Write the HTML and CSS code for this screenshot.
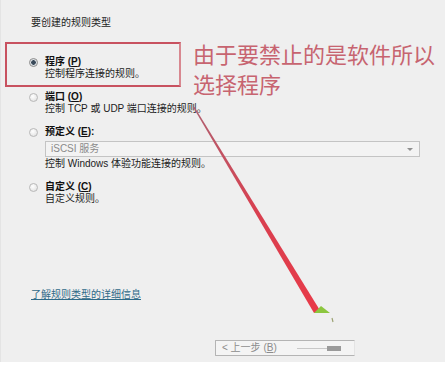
FILE: index.html
```html
<!DOCTYPE html>
<html lang="zh-CN">
<head>
<meta charset="utf-8">
<title>规则类型</title>
<link rel="stylesheet" href="styles.css">
</head>
<body>
<div class="page">
  <div class="title">要创建的规则类型</div>
  <div class="options">
    <div class="opt">
      <span class="radio checked"></span>
      <div class="body">
        <div class="label">程序 (<u>P</u>)</div>
        <div class="desc">控制程序连接的规则。</div>
      </div>
    </div>
    <div class="opt">
      <span class="radio"></span>
      <div class="body">
        <div class="label">端口 (<u>O</u>)</div>
        <div class="desc">控制 TCP 或 UDP 端口连接的规则。</div>
      </div>
    </div>
    <div class="opt">
      <span class="radio"></span>
      <div class="body">
        <div class="label">预定义 (<u>E</u>):</div>
        <div class="select"><span>iSCSI 服务</span><span class="caret"></span></div>
        <div class="desc">控制 Windows 体验功能连接的规则。</div>
      </div>
    </div>
    <div class="opt">
      <span class="radio"></span>
      <div class="body">
        <div class="label">自定义 (<u>C</u>)</div>
        <div class="desc">自定义规则。</div>
      </div>
    </div>
  </div>
  <a class="link" href="#">了解规则类型的详细信息</a>
  <div class="buttons">
    <div class="btn"><span>&lt; 上一步 (<u>B</u>)</span><span class="blur"><i class="bar"></i><i class="blk"></i></span></div>
  </div>

  <div class="mark"></div>
  <div class="note">由于要禁止的是软件所以<br>选择程序</div>
  <svg class="arrow" width="445" height="368" viewBox="0 0 445 368">
    <defs>
      <linearGradient id="g" x1="192" y1="108" x2="317" y2="313" gradientUnits="userSpaceOnUse">
        <stop offset="0" stop-color="#b06070"/>
        <stop offset="0.5" stop-color="#d84050"/>
        <stop offset="1" stop-color="#e83a48"/>
      </linearGradient>
    </defs>
    <polygon points="192,107 193.5,107 320,312 313,313" fill="url(#g)"/>
    <polygon points="313,313 329,313 320,306" fill="#8cc63f"/>
    <path d="M331 318 L332 322" stroke="#9aa070" stroke-width="1.2"/>
  </svg>
</div>
</body>
</html>
```
FILE: styles.css
```css
html, body {
  margin: 0;
  padding: 0;
  background: #ffffff;
}
.page {
  position: relative;
  width: 445px;
  height: 362px;
  background: #efefef;
  font-family: "Liberation Sans", "Noto Sans CJK SC", sans-serif;
  font-size: 10px;
  line-height: 12px;
  color: #1c1c1c;
  overflow: hidden;
  border-left: 1px solid #e4e4e4;
  box-sizing: border-box;
}
.title {
  padding: 17px 0 0 30px;
}
.options {
  display: flex;
  flex-direction: column;
  gap: 11px;
  margin-top: 27px;
  padding-left: 28px;
}
.opt {
  display: flex;
  align-items: flex-start;
  gap: 7px;
}
.radio {
  width: 7px;
  height: 7px;
  margin-top: 2px;
  border-radius: 50%;
  border: 1px solid #b8b8b8;
  background: radial-gradient(circle at 40% 35%, #ffffff, #dcdcdc);
  flex: none;
}
.radio.checked {
  border-color: #8a8a8a;
  background: radial-gradient(circle, #3a4a5a 0 2px, #cfd6dc 2.5px, #f4f4f4 4px);
}
.body {
  display: flex;
  flex-direction: column;
}
.label {
  font-weight: bold;
  color: #111;
}
.label u, .btn u {
  text-decoration: underline;
}
.select {
  width: 362px;
  height: 14px;
  margin-top: 3px;
  border: 1px solid #c4c4c4;
  background: #f3f3f3;
  color: #8a8a8a;
  display: flex;
  align-items: center;
  justify-content: space-between;
  padding: 0 6px 0 5px;
  box-sizing: content-box;
  margin-bottom: 1px;
}
.caret {
  width: 0;
  height: 0;
  border-left: 3px solid transparent;
  border-right: 3px solid transparent;
  border-top: 3px solid #909090;
}
.link {
  display: block;
  width: max-content;
  margin: 84px 0 0 30px;
  color: #2f6a88;
  text-decoration: underline;
}
.buttons {
  display: flex;
  margin-top: 39px;
  padding-left: 214px;
}
.btn {
  width: 132px;
  height: 14px;
  border: 1px solid #b4b4b4;
  border-right-color: #e4e4e4;
  background: #f4f4f4;
  color: #8c8c8c;
  display: flex;
  align-items: center;
  padding-left: 6px;
  gap: 4px;
  box-sizing: content-box;
  border-radius: 1px;
}
.blur {
  position: relative;
  flex: 1;
  height: 14px;
  display: flex;
  align-items: center;
  gap: 0;
}
.bar {
  display: block;
  width: 30px;
  height: 1px;
  background: #c8c8c8;
  margin-left: 16px;
}
.blk {
  display: block;
  width: 14px;
  height: 5px;
  background: #9a9a9a;
}
.mark {
  position: absolute;
  left: 4px;
  top: 42px;
  width: 172px;
  height: 41px;
  border: 2px solid #c85260;
  border-right-color: #d88890;
}
.note {
  position: absolute;
  left: 192px;
  top: 41px;
  font-size: 22px;
  line-height: 30px;
  color: #c76470;
  white-space: nowrap;
  letter-spacing: 0;
}
.arrow {
  position: absolute;
  left: 0;
  top: 0;
  pointer-events: none;
}
```
